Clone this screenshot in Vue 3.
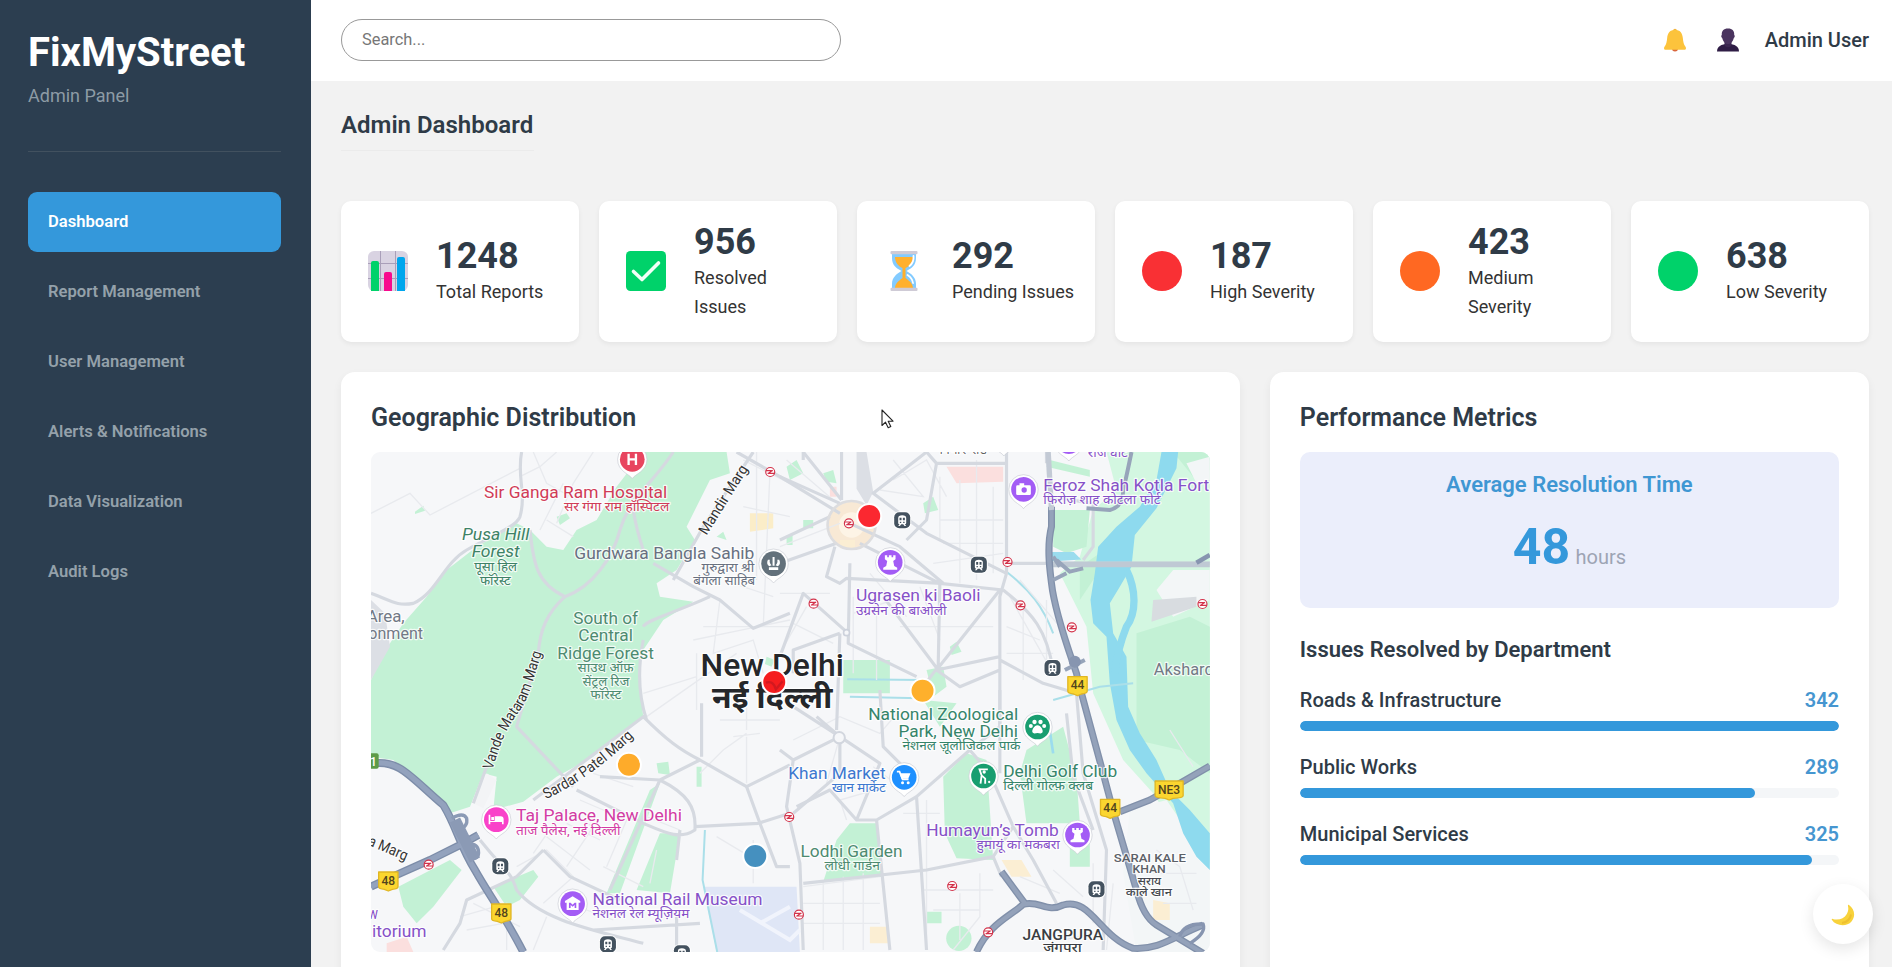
<script setup>
const nav = ['Dashboard', 'Report Management', 'User Management', 'Alerts & Notifications', 'Data Visualization', 'Audit Logs']

const stats = [
  { icon: 'chart', value: '1248', label: 'Total Reports' },
  { icon: 'check', value: '956', label: 'Resolved Issues' },
  { icon: 'hourglass', value: '292', label: 'Pending Issues' },
  { icon: 'circle', color: '#f93034', value: '187', label: 'High Severity' },
  { icon: 'circle', color: '#ff6822', value: '423', label: 'Medium Severity' },
  { icon: 'circle', color: '#00d26a', value: '638', label: 'Low Severity' },
]

const departments = [
  { name: 'Roads & Infrastructure', count: 342 },
  { name: 'Public Works', count: 289 },
  { name: 'Municipal Services', count: 325 },
]

// Map drawing units: three per screen pixel.
const localRoads = [
  'M33 220 L150 160 L210 225 L480 85 M520 36 L560 130 L650 180 M610 130 L540 270 M700 36 L640 130 L590 250 M560 240 L640 290 M480 110 L540 80 L590 36',
  'M860 830 L1130 640 M1150 60 L1290 130 M1150 200 L1290 230 M1190 36 V420 M1030 560 H1290 M1080 480 L1060 640 L1180 600 L1210 700 M1010 640 V810 M850 760 L1010 710 M1000 600 L1290 540 M1120 430 L1240 470 M1230 100 L1210 560',
  'M1260 320 L1440 250 M1280 60 L1420 180 M1600 120 L1700 60 L1760 170 M1600 60 L1690 170 L1560 150 M1740 110 V300 M1800 120 V430 M1850 60 V420 M1900 140 V400 M1740 240 H1930 M1750 310 H1930 M1720 370 L1930 340 M1480 470 V700 M1550 470 V720 M1620 560 H1900 M1480 520 L1600 480 M1530 400 L1640 530 M1680 440 L1740 600 M1260 460 H1410 M1300 550 L1420 610 M1340 500 L1260 640 M1950 470 L2080 700 M1940 560 L2040 600 M1980 420 L2100 560 M1940 640 H2080 M1990 500 V720 M2060 480 V660',
  'M520 1240 L610 1110 L700 1160 L620 1280 M620 1150 L720 1200 M660 1080 L800 1140 L740 1280 M700 1000 L820 1040 M560 1190 L690 1290 M470 1280 L560 1230 L640 1310 L550 1390 M340 1390 L480 1460 M300 1430 L440 1390 L440 1530 M320 1470 L430 1450 M520 1530 L560 1430 M600 1380 L760 1440 M730 1280 L850 1340 M860 1130 L960 1170 M890 1230 L870 1330 M1020 1000 L1090 930 L1160 880 M1160 870 V760 M1160 890 V1030 M1120 890 L1200 880 M1080 840 H1260 M1180 1200 V1330 M1070 1190 L1170 1250',
  'M1300 900 L1440 830 L1560 880 L1620 810 M1440 890 L1400 1030 M1540 980 L1620 1040 M1460 1140 L1440 1080 L1580 1040 M1330 1340 L1560 1310 M1330 1390 H1560 M1330 1450 H1560 M1390 1320 V1530 M1450 1310 V1530 M1510 1300 V1530 M1700 1080 V1530 M1630 1120 H1740 M1690 1350 H1900 M1720 1410 H1860 M1800 1360 V1500 M1860 1300 V1430 L1780 1530 M1930 1320 L2010 1390 M1980 1310 L2100 1360 M2080 1290 L2170 1370 M2200 1270 V1450 M2260 1330 L2240 1530 M2110 1500 L2200 1480 M2390 1230 L2460 1280 L2500 1410 M2380 1300 H2510 M2410 1390 H2510 M2430 870 L2500 980',
]

const arterials = [
  'M33 460 C90 480 110 500 160 490 C230 460 250 370 320 330 C390 290 470 260 480 230 C500 160 470 110 485 36',
  'M510 270 C520 370 530 430 615 470 C700 440 760 350 780 270 C810 170 880 130 940 36',
  'M615 470 C560 520 540 570 535 640 L470 860 L640 1040 M815 170 C820 230 840 300 850 330',
  'M940 420 L1030 260 L1180 36 M880 370 L1000 440 L1080 480 L1180 565 L1290 520 M850 560 C860 540 940 520 1050 470',
  'M1130 36 L1260 110 L1440 220',
  'M340 1090 L380 980 M520 1080 L850 830 C920 900 960 930 1020 960 L1160 1040 L1290 975 M1025 950 V790 M860 840 C840 780 830 700 850 600',
  'M720 1010 L900 1020 L1020 960 M900 1020 L750 1350 M900 1020 C980 1060 1010 1100 1005 1170 C960 1200 920 1180 850 1150 L650 1050 M1005 1160 L1195 1150 L1290 1120 M1160 1040 L1200 1150 L1250 1280 H1290 M960 1170 L950 1260',
  'M550 1230 L630 1310 L780 1380 M360 1200 C440 1300 450 1290 470 1350 C540 1440 700 1470 850 1510 M470 1310 L320 1380 L300 1450 L250 1530 M700 1470 L1020 1450 M950 1530 V1430 M550 1230 L470 1310',
  'M1445 36 V180 M1330 36 L1445 180 M1700 36 L1540 160 L1700 280 L1940 400 M1470 250 L1620 320 L1750 430 M1500 310 L1740 430 L1930 450 M1425 320 L1400 410 L1440 430 L1460 415 L1745 430',
  'M1640 300 L1700 240 L1730 70 L1940 70 M1940 36 V400 L1920 470 V1000 M1730 70 L1700 36 M1570 470 L1735 690 M1470 370 L1465 610 L1670 710 M1740 430 L1735 680 L1690 740 M1920 450 L1730 690 L1920 650 M1730 690 L1800 740 L1920 690 M1465 580 L1330 460 L1260 650 M1930 450 C2020 520 2060 570 2080 690 M1920 660 L2050 730 L2150 760',
  'M1260 110 L1440 190 M1260 370 L1430 310 M1440 580 L1300 630 V700 M1440 580 L1430 870 M1260 300 L1410 230 M1330 36 V60',
  'M1440 890 L1300 800 M1440 890 L1370 830 M1440 890 L1560 970 L1490 1140 M1440 890 L1300 960 L1280 1100 L1320 1270 L1330 1530 M1440 890 L1440 1000 L1300 1120 M1300 960 L1260 930 M1560 750 L1570 920 L1640 990',
  'M1550 1140 L1670 1070 L1830 930 L1920 860 L1920 750 M1310 1100 L1410 1050 L1490 1140 L1550 1140 L1590 1530 M1330 1330 L1700 1290 L1900 1250 L1960 1160 L1890 1000 L1830 930 M1670 1070 L1700 1530 M1900 1250 L1925 1310 M1960 1160 L2020 1260 L2090 1390',
  'M2150 760 L2170 1000 L2240 1230 L2230 1530 M2120 820 L2140 1010 L2200 1170 M1940 370 H2550 M2060 70 V36 M2070 170 L2200 190 L2200 320 L2170 360',
]

const forests = [
  'M33 720 L70 640 L130 550 L200 470 L260 390 L350 320 L470 250 L510 270 L560 320 L610 330 L650 270 L710 240 L770 140 L850 36 H1100 L1110 100 L1050 120 L980 260 L1005 300 L950 390 L890 430 L900 470 L1000 485 L910 540 L850 630 L835 700 L850 830 L700 950 L590 1010 L490 1085 L400 1110 L410 1010 L370 1000 L330 1100 L270 1120 L180 1030 L100 960 L33 950 Z',
  'M115 1340 L270 1260 L305 1290 L220 1400 L170 1450 L130 1400 Z',
  'M900 1180 L960 1180 L930 1360 L830 1350 Z M870 1050 L900 1030 L780 1360 L740 1360 Z M400 1340 L520 1290 L535 1310 L480 1380 L440 1400 Z',
  'M1470 1150 L1550 1150 L1565 1310 L1390 1325 L1430 1200 Z M1750 1010 L1820 940 L1880 960 L1900 1260 L1790 1255 L1755 1180 Z M2000 930 L2110 860 L2150 1010 L2160 1150 L2000 1150 L1980 1000 Z',
  'M1450 660 H1590 V760 H1450 Z M1700 690 L1750 680 L1760 740 L1720 770 Z M1280 80 l30 -20 l20 40 l-40 20 Z M1390 100 l30 -10 l10 40 l-30 -5 Z M1690 190 l30 -20 l15 40 l-40 10 Z M1770 620 l20 -15 l15 30 l-30 10 Z M1690 780 L1740 860 L1790 790 Z',
  'M2080 210 L2190 210 L2180 320 L2120 340 L2080 320 Z M2070 60 L2190 90 L2190 110 L2060 80 Z M2130 1200 h60 v80 h-60 Z M1700 1415 h45 v35 h-45 Z M165 215 l25 -18 l5 15 l-30 10 Z M890 970 l35 -5 l5 40 l-35 -5 Z M1010 980 h15 v60 h-15 Z M590 230 l30 -10 l10 15 l-30 20 Z M1280 285 h18 v30 h-18 Z M1330 240 h30 v25 h-30 Z M1070 290 l20 -15 l10 25 Z M1220 650 l25 10 l-10 20 l-20 -8 Z',
]

const labels = [
  ['Sir Ganga Ram Hospital', 372, 174, 550, 50, '#d03b57'],
  ['सर गंगा राम हॉस्पिटल', 612, 214, 316, 38, '#d03b57'],
  ['Gurdwara Bangla Sahib', 643, 356, 540, 50, '#687080'],
  ['गुरुद्वारा श्री', 1025, 396, 158, 38, '#687080'],
  ['बंगला साहिब', 1000, 436, 186, 38, '#687080'],
  ['पूसा हिल', 343, 392, 128, 38, '#3d8265'],
  ['फॉरेस्ट', 360, 434, 92, 38, '#3d8265'],
  ['South of', 640, 551, 194, 50, '#4d8a70'],
  ['Central', 655, 603, 164, 50, '#4d8a70'],
  ['Ridge Forest', 592, 656, 290, 50, '#4d8a70'],
  ['साउथ ऑफ़', 653, 697, 168, 38, '#4d8a70'],
  ['सेंट्रल रिज', 668, 738, 140, 38, '#4d8a70'],
  ['फॉरेस्ट', 692, 778, 92, 38, '#4d8a70'],
  ['Area,', 20, 545, 114, 48, '#727985'],
  ['onment', 25, 598, 164, 48, '#727985'],
  ['Feroz Shah Kotla Fort', 2050, 152, 498, 50, '#8651c8'],
  ['फिरोज़ शाह कोटला फोर्ट', 2050, 192, 352, 38, '#8651c8'],
  ['राज घाट', 2184, 52, 120, 38, '#8651c8'],
  ['Ugrasen ki Baoli', 1488, 482, 374, 50, '#8651c8'],
  ['उग्रसेन की बाओली', 1488, 524, 272, 38, '#8651c8'],
  ['Akshardham', 2382, 704, 276, 50, '#727985'],
  ['National Zoological', 1525, 840, 450, 50, '#35846a'],
  ['Park, New Delhi', 1616, 891, 358, 50, '#35846a'],
  ['नेशनल ज़ूलोजिकल पार्क', 1628, 931, 354, 38, '#35846a'],
  ['Khan Market', 1285, 1017, 292, 50, '#3c78d0'],
  ['खान मार्केट', 1416, 1057, 162, 38, '#3c78d0'],
  ['Delhi Golf Club', 1930, 1011, 342, 50, '#35846a'],
  ['दिल्ली गोल्फ़ क्लब', 1930, 1051, 270, 38, '#35846a'],
  ['Humayun’s Tomb', 1699, 1188, 398, 50, '#8651c8'],
  ['हुमायूं का मकबरा', 1850, 1228, 250, 38, '#8651c8'],
  ['Lodhi Garden', 1322, 1252, 306, 50, '#4d8a70'],
  ['लोधी गार्डन', 1394, 1291, 166, 38, '#4d8a70'],
  ['Taj Palace, New Delhi', 468, 1143, 498, 50, '#d23ca4'],
  ['ताज पैलेस, नई दिल्ली', 468, 1184, 314, 38, '#d23ca4'],
  ['National Rail Museum', 698, 1394, 510, 50, '#8651c8'],
  ['नेशनल रेल म्यूज़ियम', 698, 1435, 290, 38, '#8651c8'],
  ['w', 24, 1438, 30, 48, '#8651c8'],
  ['itorium', 36, 1492, 164, 48, '#8651c8'],
]

const places = [
  ['SARAI KALE', 2262, 1265, 216, 33, '#5b6067'],
  ['KHAN', 2318, 1300, 100, 33, '#5b6067'],
  ['सराय', 2334, 1334, 70, 32, '#45494f'],
  ['काले खान', 2298, 1367, 138, 32, '#45494f'],
  ['JANGPURA', 1988, 1500, 242, 42, '#3a3d42'],
  ['जंगपुरा', 2050, 1536, 116, 38, '#3a3d42'],
]

const pins = [
  { x: 817, y: 58, c: '#e8455f', g: 'H' },
  { x: 1241, y: 371, c: '#63717b', g: 'temple' },
  { x: 1991, y: 148, c: '#a35cf5', g: 'camera' },
  { x: 2127, y: 5, c: '#a35cf5', g: 'rook' },
  { x: 1932, y: -10, c: '#63717b', g: 'rook' },
  { x: 1591, y: 367, c: '#a35cf5', g: 'rook' },
  { x: 2033, y: 861, c: '#189e70', g: 'paw' },
  { x: 1633, y: 1012, c: '#1e90ff', g: 'cart' },
  { x: 1871, y: 1008, c: '#189e70', g: 'golf' },
  { x: 2153, y: 1185, c: '#a35cf5', g: 'rook' },
  { x: 409, y: 1139, c: '#f942c9', g: 'bed' },
  { x: 638, y: 1391, c: '#a35cf5', g: 'museum' },
]

const trains = [[1627, 241], [1857, 374], [2078, 684], [421, 1279], [744, 1513], [966, 1540], [2210, 1348]]
const metros = [[1231, 96], [1467, 250], [1943, 366], [1982, 496], [2136, 562], [2528, 492], [1361, 491], [1288, 1131], [1317, 1424], [1777, 1338], [1885, 1477], [206, 1274]]
const shields = [['44', 2153, 736, 58], ['44', 2251, 1104, 58], ['NE3', 2428, 1049, 84], ['48', 85, 1322, 58], ['48', 424, 1418, 58]]
const reports = [[1528, 228, '#fb2830'], [1243, 726, '#f51d1f'], [1688, 752, '#feb02c'], [807, 974, '#feab2a'], [1186, 1248, '#4590bf']]
</script>

<template>
  <div class="app">
    <aside class="sidebar">
      <div class="brand">
        <div class="brand-name">FixMyStreet</div>
        <div class="brand-sub">Admin Panel</div>
      </div>
      <nav class="nav">
        <a v-for="(item, i) in nav" :key="item" class="nav-item" :class="{ active: i === 0 }">{{ item }}</a>
      </nav>
    </aside>

    <div class="main">
      <header class="topbar">
        <input class="search" type="text" placeholder="Search..." />
        <div class="user">
          <svg class="bell" viewBox="0 0 22 24">
            <circle cx="11" cy="20.500" r="3" fill="#d9663c" />
            <circle cx="11" cy="2.500" r="1.800" fill="#f2b13c" />
            <path d="M11 1.800c5 0 7.400 3.600 7.800 8 .4 4 .9 6.800 2.700 9 .9 1.200.5 3-.9 3H1.400c-1.400 0-1.800-1.800-.9-3 1.800-2.200 2.300-5 2.700-9 .4-4.400 2.800-8 7.800-8z" fill="#fcc33c" />
          </svg>
          <svg class="person" viewBox="0 0 22 24">
            <path d="M0 23.500c0-5 4-7.500 11-7.500s11 2.500 11 7.500z" fill="#2f1d45" />
            <path d="M7.500 12h7v5c-1 3-6 3-7 0z" fill="#3b2751" />
            <path d="M11 .5c4.500 0 6.500 2.500 6.200 6.500.8.3.8 2.500-.4 2.900C16 13.500 13.500 16 11 16s-5-2.500-5.800-6.100C4 9.500 4 7.300 4.800 7 4.500 3 6.500.5 11 .5z" fill="#4a345f" />
          </svg>
          <span class="user-name">Admin User</span>
        </div>
      </header>

      <main class="content">
        <h2 class="page-title">Admin Dashboard</h2>

        <section class="stats">
          <article v-for="s in stats" :key="s.label" class="stat">
            <svg class="stat-icon" viewBox="0 0 40 40">
              <g v-if="s.icon === 'chart'">
                <rect width="40" height="40" rx="6" fill="#d9d3e2" />
                <path d="M0 12.500H40 M0 27.500H40 M12.500 0V40 M27.500 0V40" stroke="#a99fb9" stroke-width="1" />
                <path d="M3 40V12a2 2 0 0 1 2-2h4a2 2 0 0 1 2 2V40z" fill="#00d26a" />
                <path d="M16 40V23a2 2 0 0 1 2-2h4a2 2 0 0 1 2 2V40z" fill="#f70a8d" />
                <path d="M29 40V8a2 2 0 0 1 2-2h4a2 2 0 0 1 2 2V40z" fill="#00a6ed" />
              </g>
              <g v-else-if="s.icon === 'check'">
                <rect width="40" height="40" rx="4.500" fill="#00d26a" />
                <path d="M7.500 20.500L16 28.500L32.500 12" fill="none" stroke="#f2fff8" stroke-width="3.600" stroke-linecap="round" stroke-linejoin="round" />
              </g>
              <g v-else-if="s.icon === 'hourglass'">
                <path d="M8 3H32V7c0 7-4 10-9.500 13C28 23 32 27 32 33v4H8v-4c0-6 4-10 9.500-13C12 17 8 14 8 7z" fill="#83cbff" />
                <path d="M11 6H29c0 5-3 9-7.500 11v10c4 3 7 5 7.500 10H11c.5-5 3.500-7 7.500-10V17C14 15 11 11 11 6z" fill="#ffb02e" />
                <path d="M29.500 5c.5 5-1.500 8-4 10M23.500 24c3 2 5 4 5.500 8" fill="none" stroke="#fff" stroke-width="1.800" stroke-linecap="round" />
                <rect x="6.500" width="27" height="3.200" rx="1" fill="#cfcbd6" />
                <rect x="6.500" y="36.800" width="27" height="3.200" rx="1" fill="#cfcbd6" />
              </g>
              <circle v-else cx="20" cy="20" r="20" :fill="s.color" />
            </svg>
            <div class="stat-text">
              <div class="stat-value">{{ s.value }}</div>
              <div class="stat-label">{{ s.label }}</div>
            </div>
          </article>
        </section>

        <section class="panels">
          <article class="panel">
            <h3 class="panel-title">Geographic Distribution</h3>
            <svg class="map" viewBox="33 36 2517 1500" preserveAspectRatio="none">
              <rect x="33" y="36" width="2517" height="1500" fill="#f6f7f9" />
              <!-- riverside land -->
              <path d="M2240 36H2550V1290L2500 1250L2380 1060L2290 960L2200 760L2180 560L2100 400L2160 350L2200 210L2270 150Z" fill="#d3f7e1" />
              <path d="M2330 580L2490 530L2550 560V1000L2460 930L2330 900Z M2440 36L2550 36V90L2500 110Z M2280 300L2200 420L2160 480V380Z" fill="#c3f1d5" />
              <path d="M2440 390H2550V480L2440 530L2390 450Z M2480 70L2550 50V120L2510 130Z M2310 1110L2420 1080L2550 1270V1536H2330L2290 1300Z" fill="#f3f6f7" />
              <!-- parks and forests -->
              <path v-for="d in forests" :key="d" :d="d" fill="#c3f1d5" />
              <path d="M33 480L75 520L90 620L33 720Z M1490 36h30l20 120l-20 40l-30 -50z" fill="#dcdfe5" />
              <path d="M340 1090L380 1000L410 1020L370 1105Z" fill="#f3f4f6" />
              <path d="M2380 480L2510 470V500L2375 545Z" fill="#d8dce0" />
              <path d="M1760 80H1930V125L1790 130Z M1410 140h20v30h-20z M80 1510l60 -20l20 46h-80z" fill="#fbdfde" />
              <path d="M1030 1340H1310L1320 1536H1070Z" fill="#dfe6f6" />
              <path d="M1140 1410L1290 1500L1320 1470M1200 1450L1290 1400" fill="none" stroke="#f1f4fc" stroke-width="12" />
              <circle cx="1475" cy="255" r="70" fill="#f8e9d5" />
              <circle cx="1475" cy="255" r="38" fill="#fdf4e6" />
              <path d="M1440 300h45v25h-45z M1530 1460h55v50h-55z M1925 1260l60 0l30 50l-60 0z M2380 1380l50 10v50h-50z" fill="#fbeed3" />
              <path d="M1170 220h70v45l-70 10z" fill="#fbedc8" />
              <circle cx="1797" cy="1495" r="38" fill="#c3f1d5" />
              <!-- river -->
              <path d="M2405 36H2455L2450 85L2390 205L2325 285L2315 380L2280 440L2250 490L2260 580L2300 650L2305 800L2340 880L2390 960L2430 1050L2490 1110L2550 1180V1290L2510 1250L2470 1180L2440 1090L2360 1000L2310 930L2270 840L2250 730L2240 590L2200 550L2192 480L2205 400L2215 320L2270 260L2340 200L2390 120Z" fill="#8edaee" />
              <path d="M2300 390C2330 450 2330 520 2300 560C2280 610 2270 650 2265 700" fill="none" stroke="#8edaee" stroke-width="22" />
              <path d="M1462 718L1690 720M1470 770L1680 775M1035 1170L1028 1320L1072 1536M1940 395C2010 450 2050 500 2080 580M2080 780L2220 740L2320 730" fill="none" stroke="#aadfe9" stroke-width="6" />
              <path d="M2065 840l15 100M2080 340l60 0l15 15l-75 5z" fill="#9bdcee" stroke="#9bdcee" stroke-width="8" />
              <!-- streets -->
              <path v-for="d in localRoads" :key="d" :d="d" fill="none" stroke="#e8eaee" stroke-width="4" />
              <path v-for="d in arterials" :key="d" :d="d" fill="none" stroke="#d5d9e0" stroke-width="9.500" stroke-linejoin="round" />
              <circle cx="1475" cy="255" r="72" fill="none" stroke="#dddddf" stroke-width="8" />
              <circle cx="1438" cy="893" r="17" fill="#f6f7f9" stroke="#d2d6de" stroke-width="6" />
              <circle cx="1460" cy="578" r="9" fill="#f6f7f9" stroke="#cdd2dc" stroke-width="5" />
              <path d="M2060 373H2550" stroke="#bfc9d4" stroke-width="17" />
              <path d="M2510 368L2550 345" stroke="#8795b0" stroke-width="14" />
              <!-- highways -->
              <g fill="none" stroke-linejoin="round">
                <path v-for="w in [24, 16]" :key="w" :stroke="w === 24 ? '#7d8da9' : '#93a2bd'" :stroke-width="w"
                  d="M40 970C120 960 150 1010 250 1095C290 1160 300 1220 345 1290C390 1370 430 1420 490 1536 M33 1340L120 1300L210 1260L310 1210L355 1185" />
                <path d="M275 1135Q310 1115 320 1135Q325 1160 295 1170L285 1150M330 1210Q360 1215 355 1245Q345 1265 330 1240" stroke="#8b9ab5" stroke-width="10" />
                <path d="M285 1140L345 1260" stroke="#8b9ab5" stroke-width="34" />
                <path v-for="w in [21, 13]" :key="'e' + w" :stroke="w === 21 ? '#8190aa' : '#94a2ba'" :stroke-width="w"
                  d="M2075 200V260C2060 320 2070 390 2075 430C2085 520 2130 640 2150 700L2165 760L2230 1000L2262 1120L2330 1350Q2350 1430 2390 1455L2530 1540 M2280 1115L2370 1080L2460 1030L2550 978 M1925 1295L1995 1390 M1850 1536C1890 1450 1950 1430 1990 1393C2040 1380 2060 1420 2110 1395C2190 1370 2220 1490 2320 1525C2400 1530 2440 1490 2530 1455" />
                <path d="M2075 210L2065 36" stroke="#c3cad5" stroke-width="16" />
                <path d="M2315 36Q2300 110 2290 150Q2290 200 2250 210L2180 205M2090 360L2130 395L2170 385M2080 350L2100 380M2080 420L2120 400M2115 690l60 -30" stroke="#97a4ba" stroke-width="12" />
                <path d="M2460 1490Q2470 1450 2530 1452Q2540 1480 2490 1510" stroke="#8795b0" stroke-width="10" />
              </g>
              <circle cx="2145" cy="665" r="18" fill="#8795b0" />
              <rect x="20" y="940" width="36" height="46" rx="6" fill="#5d9b48" />
              <text class="badge-text light" x="40" y="977" text-anchor="middle">1</text>

              <!-- rotated street names -->
              <g class="street">
                <path id="vande" d="M398 990C425 890 450 850 488 800C515 750 525 700 547 632" fill="none" />
                <path id="sardar" d="M558 1078Q700 1010 826 885" fill="none" />
                <text><textPath href="#vande" textLength="384" lengthAdjust="spacingAndGlyphs">Vande Mataram Marg</textPath></text>
                <text><textPath href="#sardar" textLength="326" lengthAdjust="spacingAndGlyphs">Sardar Patel Marg</textPath></text>
                <text transform="translate(1040 287) rotate(-58)" textLength="236" lengthAdjust="spacingAndGlyphs">Mandir Marg</text>
                <text transform="translate(22 1214) rotate(23)" textLength="124" lengthAdjust="spacingAndGlyphs">a Marg</text>
              </g>

              <g class="city">
                <text x="1022" y="708" textLength="430" lengthAdjust="spacingAndGlyphs" font-size="92">New Delhi</text>
                <text class="native" x="1056" y="804" textLength="362" lengthAdjust="spacingAndGlyphs" font-size="90">नई दिल्ली</text>
              </g>

              <g class="poi">
                <g font-style="italic" fill="#3d8265">
                  <text x="306" y="299" font-size="50" textLength="202" lengthAdjust="spacingAndGlyphs">Pusa Hill</text>
                  <text x="335" y="351" font-size="50" textLength="144" lengthAdjust="spacingAndGlyphs">Forest</text>
                </g>
                <text v-for="(l, i) in labels" :key="i" :x="l[1]" :y="l[2]" :textLength="l[3]" lengthAdjust="spacingAndGlyphs" :font-size="l[4]" :fill="l[5]">{{ l[0] }}</text>
                <text x="1740" y="42" font-size="34" fill="#555" textLength="140">मिनार रोड</text>
              </g>
              <g class="place">
                <text v-for="l in places" :key="l[0]" :x="l[1]" :y="l[2]" :textLength="l[3]" lengthAdjust="spacingAndGlyphs" :font-size="l[4]" :fill="l[5]">{{ l[0] }}</text>
              </g>

              <g v-for="(m, i) in metros" :key="'m' + i" :transform="`translate(${m[0]} ${m[1]})`" fill="#fff" stroke="#d3324a" stroke-width="3.500">
                <circle r="13.500" />
                <path d="M-13 -4H8M-8 4H13M7 -5L-7 5" fill="none" />
              </g>
              <g v-for="(t, i) in trains" :key="'t' + i" :transform="`translate(${t[0]} ${t[1]})`">
                <rect x="-27" y="-27" width="54" height="54" rx="18" fill="#fff" />
                <rect x="-24" y="-24" width="48" height="48" rx="15" fill="#44525f" />
                <path d="M-12 -7q0 -8 12 -8t12 8v15q0 4 -4 4l4 5h-5l-4 -5h-6l-4 5h-5l4 -5q-4 0 -4 -4z" fill="#fff" />
                <path d="M-8 -8h6v8h-6zM2 -8h6v8h-6zM-7 4h4v4h-4zM3 4h4v4h-4z" fill="#44525f" />
              </g>

              <g v-for="(p, i) in pins" :key="'p' + i" :transform="`translate(${p.x} ${p.y})`">
                <path d="M0 58C-8 44 -44 36 -44 0A44 44 0 0 1 44 0C44 36 8 44 0 58Z" fill="#fff" stroke="#c8ccd3" stroke-width="2" />
                <circle r="37" :fill="p.c" />
                <g fill="#fff" stroke="none">
                  <path v-if="p.g === 'H'" d="M-11 -17V17M11 -17V17M-11 0H11" stroke="#fff" stroke-width="7" />
                  <path v-else-if="p.g === 'rook'" d="M-16 -21h7v6h5v-6h8v6h5v-6h7v12l-7 5l3 15l9 5v6h-42v-6l9 -5l3 -15l-7 -5z" />
                  <g v-else-if="p.g === 'camera'">
                    <rect x="-22" y="-12" width="44" height="29" rx="4" />
                    <path d="M-12 -18h14v8h-14z" />
                    <circle cx="2" cy="2" r="8" :fill="p.c" />
                  </g>
                  <g v-else-if="p.g === 'paw'">
                    <circle cx="-20" cy="-3" r="6" /><circle cx="-9" cy="-15" r="6.500" /><circle cx="9" cy="-15" r="6.500" /><circle cx="20" cy="-3" r="6" />
                    <path d="M0 -5C10 -5 18 10 15 16C12 22 5 18 0 18C-5 18 -12 22 -15 16C-18 10 -10 -5 0 -5Z" />
                  </g>
                  <g v-else-if="p.g === 'cart'">
                    <path d="M-22 -17h8l9 23h18" fill="none" stroke="#fff" stroke-width="5" />
                    <path d="M-14 -12h33l-7 16h-20z" /><circle cx="-5" cy="16" r="4.500" /><circle cx="12" cy="16" r="4.500" />
                  </g>
                  <g v-else-if="p.g === 'golf'">
                    <circle cx="2" cy="-12" r="5" />
                    <path d="M13 -20H-12L-6 -2L5 8V23M-6 0L-9 23" fill="none" stroke="#fff" stroke-width="5.500" />
                    <circle cx="17" cy="18" r="3.500" />
                  </g>
                  <path v-else-if="p.g === 'bed'" d="M-23 -15h5v19h13v-14h18q9 0 9 9v15h-5v-7h-35v7h-5zM-15 -8h8v9h-8z" />
                  <path v-else-if="p.g === 'museum'" fill-rule="evenodd" d="M0 -22L23 -8V-3H18V19H-18V-3H-23V-8ZM-11 -3V13H-6V4L0 9L6 4V13H11V-3H6L0 3L-6 -3Z" />
                  <path v-else d="M-3 -20h6v26h-6zM-17 -12q-6 12 4 20l7 -3q-8 -9 -5 -17zM17 -12q6 12 -4 20l-7 -3q8 -9 5 -17zM-14 11h28v8h-28z" />
                </g>
              </g>

              <g v-for="(s, i) in shields" :key="'s' + i" :transform="`translate(${s[1]} ${s[2]})`">
                <path :d="`M${-s[3] / 2} -26H${s[3] / 2}V18Q${s[3] / 2} 24 12 26L0 31L-12 26Q${-s[3] / 2} 24 ${-s[3] / 2} 18Z`" fill="#fbd62f" stroke="#e0b624" stroke-width="4" stroke-linejoin="round" />
                <text class="badge-text" y="12" text-anchor="middle">{{ s[0] }}</text>
              </g>

              <circle v-for="(r, i) in reports" :key="'r' + i" :cx="r[0]" :cy="r[1]" r="36" :fill="r[2]" stroke="#fff" stroke-width="6" />
              <path d="M1218 728Q1240 720 1248 748L1268 724" fill="none" stroke="#bb1520" stroke-width="7" opacity=".6" />
            </svg>
          </article>

          <article class="panel">
            <h3 class="panel-title">Performance Metrics</h3>
            <div class="resolution">
              <div class="resolution-title">Average Resolution Time</div>
              <div class="resolution-value">48 <span class="unit">hours</span></div>
            </div>
            <h4 class="dept-title">Issues Resolved by Department</h4>
            <div v-for="d in departments" :key="d.name" class="dept">
              <div class="dept-row">
                <span>{{ d.name }}</span>
                <span class="dept-count">{{ d.count }}</span>
              </div>
              <div class="track"><div class="fill" :style="{ width: (d.count / 342) * 100 + '%' }"></div></div>
            </div>
          </article>
        </section>
      </main>
    </div>

    <button class="theme" aria-label="Toggle theme">
      <svg viewBox="0 0 24 24" width="24" height="24">
        <path d="M18 2C23.500 6 25 13 20.500 18.500C16 24 5 23.500 .8 16.800C.5 16 1 15.600 1.700 15.900C7 17.500 13 16 15.800 11C17.500 8 17.600 5.500 16.900 2.800C16.800 2 17.400 1.600 18 2Z" fill="#f8d23b" />
        <path d="M20 11.500q-1 7 -9 8.500" stroke="#eec02f" stroke-width="2" fill="none" />
      </svg>
    </button>

    <svg class="cursor" viewBox="0 0 13 20">
      <path d="M1 1V16.500L4.500 13.200L7.200 18.800L9.800 17.600L7.200 12.200H12Z" fill="#fff" stroke="#222" stroke-width="1.100" stroke-linejoin="round" />
    </svg>
  </div>
</template>

<style>
body {
  margin: 0;
  overflow: hidden;
}
</style>

<style scoped>
.app {
  display: flex;
  height: 967px;
  overflow: hidden;
  position: relative;
  background: #f2f2f2;
  color: #2f3b47;
  font-family: Roboto, "Noto Sans", sans-serif;
}
.sidebar {
  box-sizing: border-box;
  width: 311px;
  flex: none;
  padding: 28px 30px 0 28px;
  background: #2c3e50;
}
.brand {
  height: 123px;
  border-bottom: 1px solid #42515f;
}
.brand-name {
  font-size: 40px;
  line-height: 50px;
  font-weight: 700;
  color: #fff;
}
.brand-sub {
  margin-top: 4px;
  font-size: 18px;
  line-height: 28px;
  color: #8d9ba5;
}
.nav {
  display: flex;
  flex-direction: column;
  gap: 10px;
  margin-top: 40px;
}
.nav-item {
  height: 60px;
  padding-left: 20px;
  border-radius: 9px;
  font-size: 16.600px;
  line-height: 60px;
  font-weight: 600;
  color: #94a1aa;
}
.nav-item.active {
  background: #3498db;
  color: #fff;
}
.main {
  flex: 1;
  min-width: 0;
}
.topbar {
  box-sizing: border-box;
  height: 81px;
  padding: 0 23px 2px 30px;
  display: flex;
  align-items: center;
  justify-content: space-between;
  background: #fff;
}
.search {
  box-sizing: border-box;
  width: 500px;
  height: 42px;
  padding: 0 20px;
  border: 1px solid #999;
  border-radius: 21px;
  background: #fff;
  font: 16.400px Roboto, sans-serif;
}
.search::placeholder {
  color: #777;
}
.user {
  display: flex;
  align-items: center;
}
.bell {
  width: 22px;
  height: 24px;
  margin-right: 31px;
}
.person {
  width: 22px;
  height: 24px;
  margin-right: 26px;
}
.user-name {
  font-size: 20px;
  font-weight: 500;
}
.content {
  padding: 25px 23px 0 30px;
}
.page-title {
  box-sizing: border-box;
  width: 193px;
  height: 45px;
  margin: 0 0 50px;
  border-bottom: 1px solid #ebebeb;
  font-size: 24px;
  line-height: 38px;
  font-weight: 600;
  white-space: nowrap;
}
.stats {
  display: grid;
  grid-template-columns: repeat(6, 1fr);
  gap: 20px;
}
.stat {
  box-sizing: border-box;
  height: 141px;
  padding: 0 20px 0 27px;
  display: flex;
  align-items: center;
  border-radius: 10px;
  background: #fff;
  box-shadow: 0 2px 5px rgba(0, 0, 0, 0.06);
}
.stat-icon {
  width: 40px;
  height: 40px;
  flex: none;
  margin: -1px 28px 0 0;
}
.stat-text {
  margin-top: -1px;
}
.stat-value {
  font-size: 36px;
  line-height: 41px;
  font-weight: 700;
}
.stat-label {
  font-size: 18px;
  line-height: 29px;
  color: #333;
}
.panels {
  display: grid;
  grid-template-columns: 3fr 2fr;
  gap: 30px;
  margin-top: 30px;
}
.panel {
  box-sizing: border-box;
  height: 610px;
  padding: 26px 30px;
  border-radius: 14px;
  background: #fff;
  box-shadow: 0 4px 10px rgba(0, 0, 0, 0.06);
}
.panel-title {
  margin: 0 0 14px;
  font-size: 25px;
  line-height: 40px;
  font-weight: 600;
}
.map {
  display: block;
  width: 100%;
  height: 500px;
  border-radius: 9px;
}
.poi text,
.street text,
.place text {
  paint-order: stroke;
  stroke: #fff;
  stroke-width: 7px;
  stroke-opacity: 0.8;
  stroke-linejoin: round;
}
.street text {
  font-size: 45px;
  fill: #333;
}
.place text {
  font-weight: 500;
}
.city text {
  font-weight: 500;
  fill: #25272a;
  paint-order: stroke;
  stroke: #fff;
  stroke-width: 7px;
}
.city .native {
  font-weight: 700;
}
.badge-text {
  font-size: 36px;
  font-weight: 500;
  fill: #51451d;
}
.badge-text.light {
  fill: #fff;
}
.resolution {
  box-sizing: border-box;
  height: 156px;
  padding-top: 16px;
  border-radius: 10px;
  background: #ebeefb;
  text-align: center;
}
.resolution-title {
  font-size: 22px;
  line-height: 34px;
  font-weight: 600;
  color: #3f97d3;
}
.resolution-value {
  margin-top: 5px;
  font-size: 50px;
  line-height: 80px;
  font-weight: 700;
  color: #3498db;
  word-spacing: -7px;
}
.unit {
  font-size: 20px;
  font-weight: 400;
  color: #9da4b4;
}
.dept-title {
  margin: 24px 0 14px;
  font-size: 22px;
  line-height: 36px;
  font-weight: 600;
}
.dept {
  height: 67px;
}
.dept-row {
  display: flex;
  justify-content: space-between;
  font-size: 20px;
  line-height: 36px;
  font-weight: 500;
}
.dept-count {
  font-weight: 600;
  color: #4696d0;
}
.track {
  margin-top: 3px;
  height: 10px;
  overflow: hidden;
  border-radius: 5px;
  background: #f4f6f8;
}
.fill {
  height: 100%;
  border-radius: 5px;
  background: #3498db;
}
.theme {
  position: absolute;
  right: 19px;
  bottom: 23px;
  width: 60px;
  height: 60px;
  padding: 2px 0 0;
  display: grid;
  place-items: center;
  border: 0;
  border-radius: 50%;
  background: #fff;
  box-shadow: 0 5px 15px rgba(0, 0, 0, 0.1);
}
.cursor {
  position: absolute;
  left: 881px;
  top: 409px;
  width: 13px;
  height: 20px;
}
</style>
